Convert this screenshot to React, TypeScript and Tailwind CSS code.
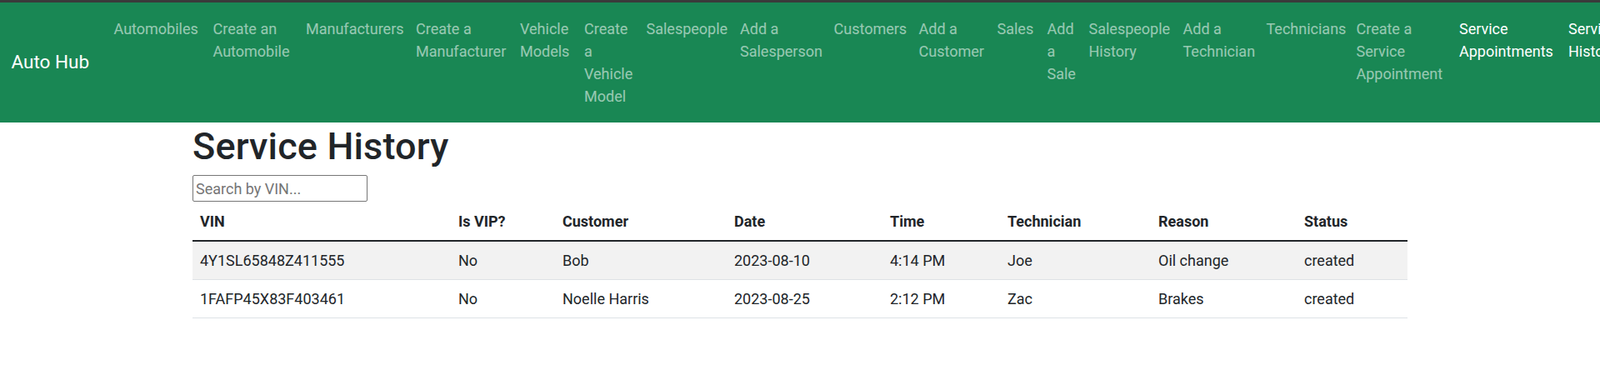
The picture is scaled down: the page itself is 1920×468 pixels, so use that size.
import React from "react";

type NavItem = { lines: string[]; w: string; active?: boolean };

const navItems: NavItem[] = [
  { lines: ["Automobiles"], w: "w-[101px]" },
  { lines: ["Create an", "Automobile"], w: "w-[93.5px]" },
  { lines: ["Manufacturers"], w: "w-[114px]" },
  { lines: ["Create a", "Manufacturer"], w: "w-[107px]" },
  { lines: ["Vehicle", "Models"], w: "w-[59px]" },
  { lines: ["Create", "a", "Vehicle", "Model"], w: "w-[56.5px]" },
  { lines: ["Salespeople"], w: "w-[94.5px]" },
  { lines: ["Add a", "Salesperson"], w: "w-[94.5px]" },
  { lines: ["Customers"], w: "w-[84px]" },
  { lines: ["Add a", "Customer"], w: "w-[76px]" },
  { lines: ["Sales"], w: "w-[42px]" },
  { lines: ["Add", "a", "Sale"], w: "w-[32px]" },
  { lines: ["Salespeople", "History"], w: "w-[95px]" },
  { lines: ["Add a", "Technician"], w: "w-[82px]" },
  { lines: ["Technicians"], w: "w-[90px]" },
  { lines: ["Create a", "Service", "Appointment"], w: "w-[105.5px]" },
  { lines: ["Service", "Appointments"], w: "w-[113px]", active: true },
  { lines: ["Service", "History"], w: "w-[110px]", active: true },
];

const rows = [
  {
    vin: "4Y1SL65848Z411555",
    vip: "No",
    customer: "Bob",
    date: "2023-08-10",
    time: "4:14 PM",
    tech: "Joe",
    reason: "Oil change",
    status: "created",
  },
  {
    vin: "1FAFP45X83F403461",
    vip: "No",
    customer: "Noelle Harris",
    date: "2023-08-25",
    time: "2:12 PM",
    tech: "Zac",
    reason: "Brakes",
    status: "created",
  },
];

export default function App() {
  return (
    <div className="min-h-[468px] bg-white text-[#212529] font-[family-name:Roboto,'Liberation_Sans',sans-serif] text-[18px] leading-[27px]">
      <div className="h-[3px] bg-[#3a3a3a]" />
      <nav className="bg-[#198754] overflow-hidden">
        <div className="flex items-center py-[9px] px-[13.5px]">
          <a className="shrink-0 w-[96px] mr-[18px] text-white text-[22.5px] leading-[33.75px] py-[5.6px] whitespace-nowrap">
            Auto Hub
          </a>
          <ul className="flex shrink-0 items-stretch">
            {navItems.map((item, i) => (
              <li key={i} className="shrink-0">
                <a
                  className={`block px-[9px] py-[9px] ${
                    item.active ? "text-white" : "text-white/55"
                  }`}
                >
                  <span className={`block whitespace-nowrap ${item.w}`}>
                    {item.lines.map((l, j) => (
                      <span key={j} className="block">
                        {l}
                      </span>
                    ))}
                  </span>
                </a>
              </li>
            ))}
          </ul>
        </div>
      </nav>
      <div className="mx-auto max-w-[1485px] px-[13.5px]">
        <h1 className="mt-[2px] mb-[7px] text-[45px] leading-[54px] font-medium tracking-[0.15px]">
          Service History
        </h1>
        <input
          type="text"
          placeholder="Search by VIN..."
          className="block box-border w-[210px] h-[32px] border border-[#767676] rounded-[2px] px-[3px] text-[18px] placeholder:text-[#757575] outline-none mb-[1px]"
        />
        <table className="w-full border-collapse text-left">
          <colgroup>
            <col className="w-[310px]" />
            <col className="w-[125px]" />
            <col className="w-[206px]" />
            <col className="w-[187px]" />
            <col className="w-[141px]" />
            <col className="w-[181px]" />
            <col className="w-[175px]" />
            <col className="w-[133px]" />
          </colgroup>
          <thead>
            <tr className="border-b-2 border-[#212529]">
              {[
                "VIN",
                "Is VIP?",
                "Customer",
                "Date",
                "Time",
                "Technician",
                "Reason",
                "Status",
              ].map((h) => (
                <th key={h} className="p-[9px] font-bold">
                  {h}
                </th>
              ))}
            </tr>
          </thead>
          <tbody>
            {rows.map((r, i) => (
              <tr
                key={r.vin}
                className={`border-b border-[#dee2e6] ${
                  i === 0 ? "bg-[#f2f2f2]" : "bg-white"
                }`}
              >
                <td className="p-[9px]">{r.vin}</td>
                <td className="p-[9px]">{r.vip}</td>
                <td className="p-[9px]">{r.customer}</td>
                <td className="p-[9px]">{r.date}</td>
                <td className="p-[9px]">{r.time}</td>
                <td className="p-[9px]">{r.tech}</td>
                <td className="p-[9px]">{r.reason}</td>
                <td className="p-[9px]">{r.status}</td>
              </tr>
            ))}
          </tbody>
        </table>
      </div>
    </div>
  );
}
